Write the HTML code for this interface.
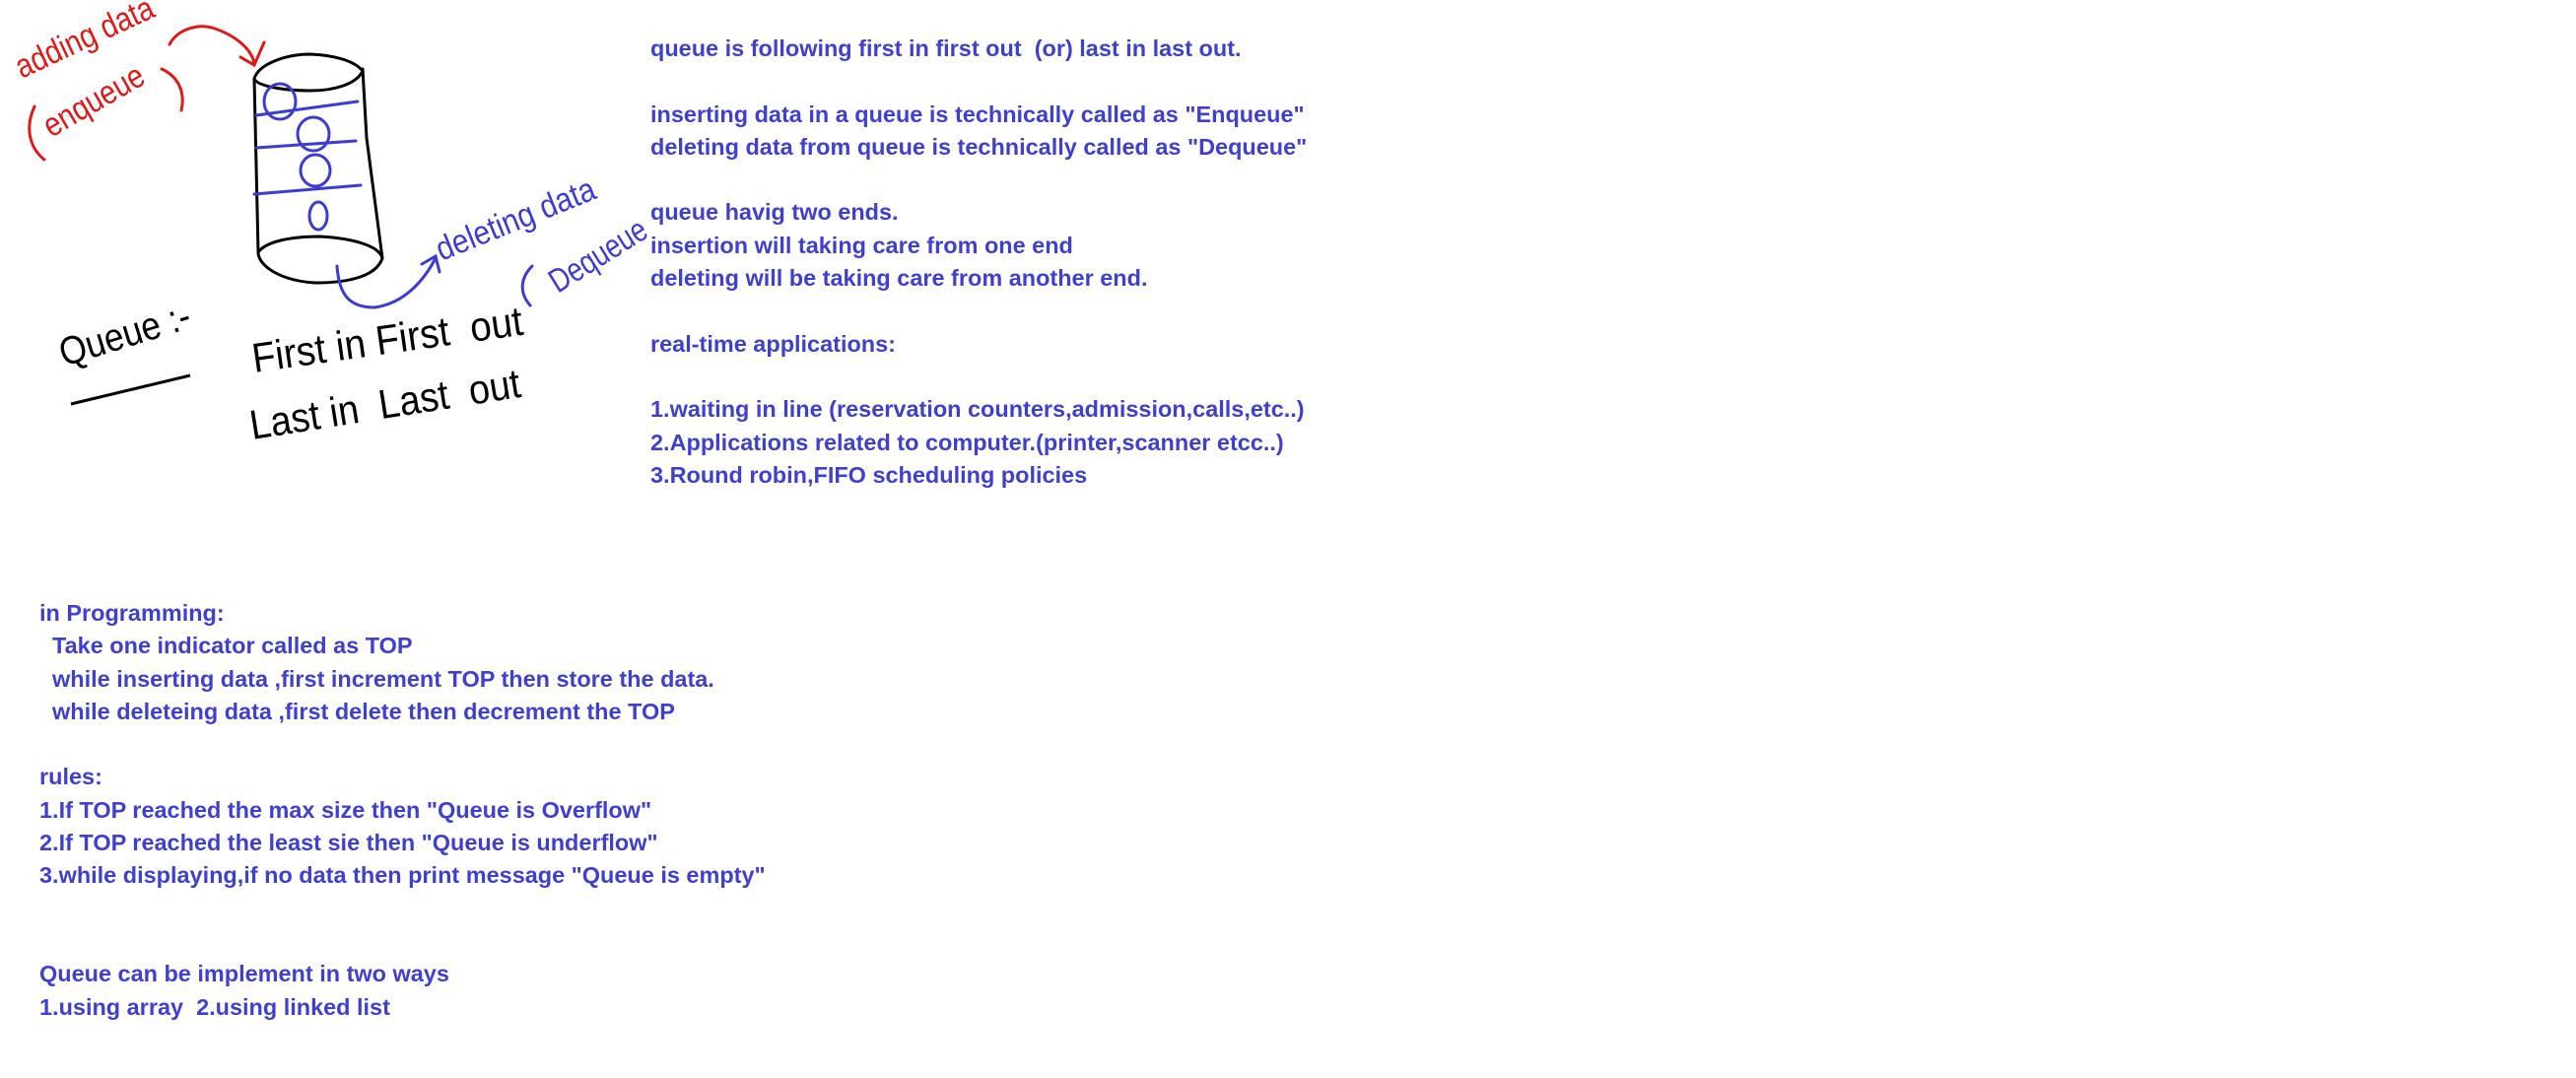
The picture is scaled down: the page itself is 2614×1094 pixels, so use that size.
<!DOCTYPE html>
<html><head><meta charset="utf-8"><style>
html,body{margin:0;padding:0;background:#fff;width:2614px;height:1094px;overflow:hidden;position:relative}
.t{position:absolute;font-family:"Liberation Sans",sans-serif;font-weight:bold;font-size:23px;line-height:33.3px;color:#3f3fd0;white-space:pre;transform:scaleX(1.02);transform-origin:0 0}
svg{position:absolute;left:0;top:0}
.h{font-family:"Liberation Sans",sans-serif;white-space:pre}
</style></head><body>
<div class="t" style="left:660px;top:33px">queue is following first in first out  (or) last in last out.

inserting data in a queue is technically called as "Enqueue"
deleting data from queue is technically called as "Dequeue"

queue havig two ends.
insertion will taking care from one end
deleting will be taking care from another end.

real-time applications:

1.waiting in line (reservation counters,admission,calls,etc..)
2.Applications related to computer.(printer,scanner etcc..)
3.Round robin,FIFO scheduling policies</div>
<div class="t" style="left:40px;top:606px">in Programming:
  Take one indicator called as TOP
  while inserting data ,first increment TOP then store the data.
  while deleteing data ,first delete then decrement the TOP

rules:
1.If TOP reached the max size then "Queue is Overflow"
2.If TOP reached the least sie then "Queue is underflow"
3.while displaying,if no data then print message "Queue is empty"


Queue can be implement in two ways
1.using array  2.using linked list</div>
<svg width="2614" height="1094" viewBox="0 0 2614 1094">
<g fill="none" stroke="#000" stroke-width="3" stroke-linecap="round">
<path d="M258,80 C262,65 290,55 315,55 C340,56 360,62 368,72 C362,85 340,92 315,92 C290,92 262,88 258,80 Z"/>
<path d="M258,80 L262,256 M368,70 L372,140 L388,262"/>
<path d="M262,256 C270,245 295,240 325,240 C360,242 385,250 388,262 C382,280 355,287 320,287 C285,285 262,270 262,256 Z"/>
</g>
<g fill="none" stroke="#3c3cd2" stroke-width="3" stroke-linecap="round">
<path d="M260,117 L363,103 M260,150 L361,143 M258,197 L366,188"/>
<ellipse cx="284" cy="103" rx="16" ry="18"/>
<ellipse cx="318" cy="136" rx="16" ry="17"/>
<ellipse cx="320" cy="173" rx="15" ry="16"/>
<ellipse cx="323" cy="219" rx="9" ry="14"/>
<path d="M342,270 C344,300 355,312 380,312 C410,308 430,285 442,262 M428,268 L442,260 L446,276"/>
<path d="M538,310 C525,295 530,280 540,270"/>
</g>
<g fill="none" stroke="#e01818" stroke-width="3" stroke-linecap="round">
<path d="M172,45 C180,30 200,24 215,28 C240,36 255,50 258,64 M244,58 L258,66 L268,43"/>
<path d="M45,162 C30,150 25,130 35,108 M164,70 C182,78 188,95 184,112"/>
</g>
<text class="h" x="0" y="0" font-size="34" fill="#e01818" transform="translate(22,80) rotate(-25) scale(0.85,1)">adding data</text>
<text class="h" x="0" y="0" font-size="34" fill="#e01818" transform="translate(52,140) rotate(-30) scale(0.85,1)">enqueue</text>
<text class="h" x="0" y="0" font-size="34" fill="#3c3cd2" transform="translate(448,265) rotate(-22) scale(0.88,1)">deleting data</text>
<text class="h" x="0" y="0" font-size="34" fill="#3c3cd2" transform="translate(566,298) rotate(-32) scale(0.8,1)">Dequeue</text>
<text class="h" x="0" y="0" font-size="40" fill="#000" transform="translate(65,372) rotate(-17) scale(0.88,1)">Queue :-</text>
<path d="M72,410 L193,381" stroke="#000" stroke-width="3" fill="none"/>
<text class="h" x="0" y="0" font-size="42" fill="#000" transform="translate(258,378) rotate(-8) scale(0.92,1)">First in First  out</text>
<text class="h" x="0" y="0" font-size="42" fill="#000" transform="translate(256,446) rotate(-9) scale(0.9,1)">Last in  Last  out</text>
</svg>
</body></html>
